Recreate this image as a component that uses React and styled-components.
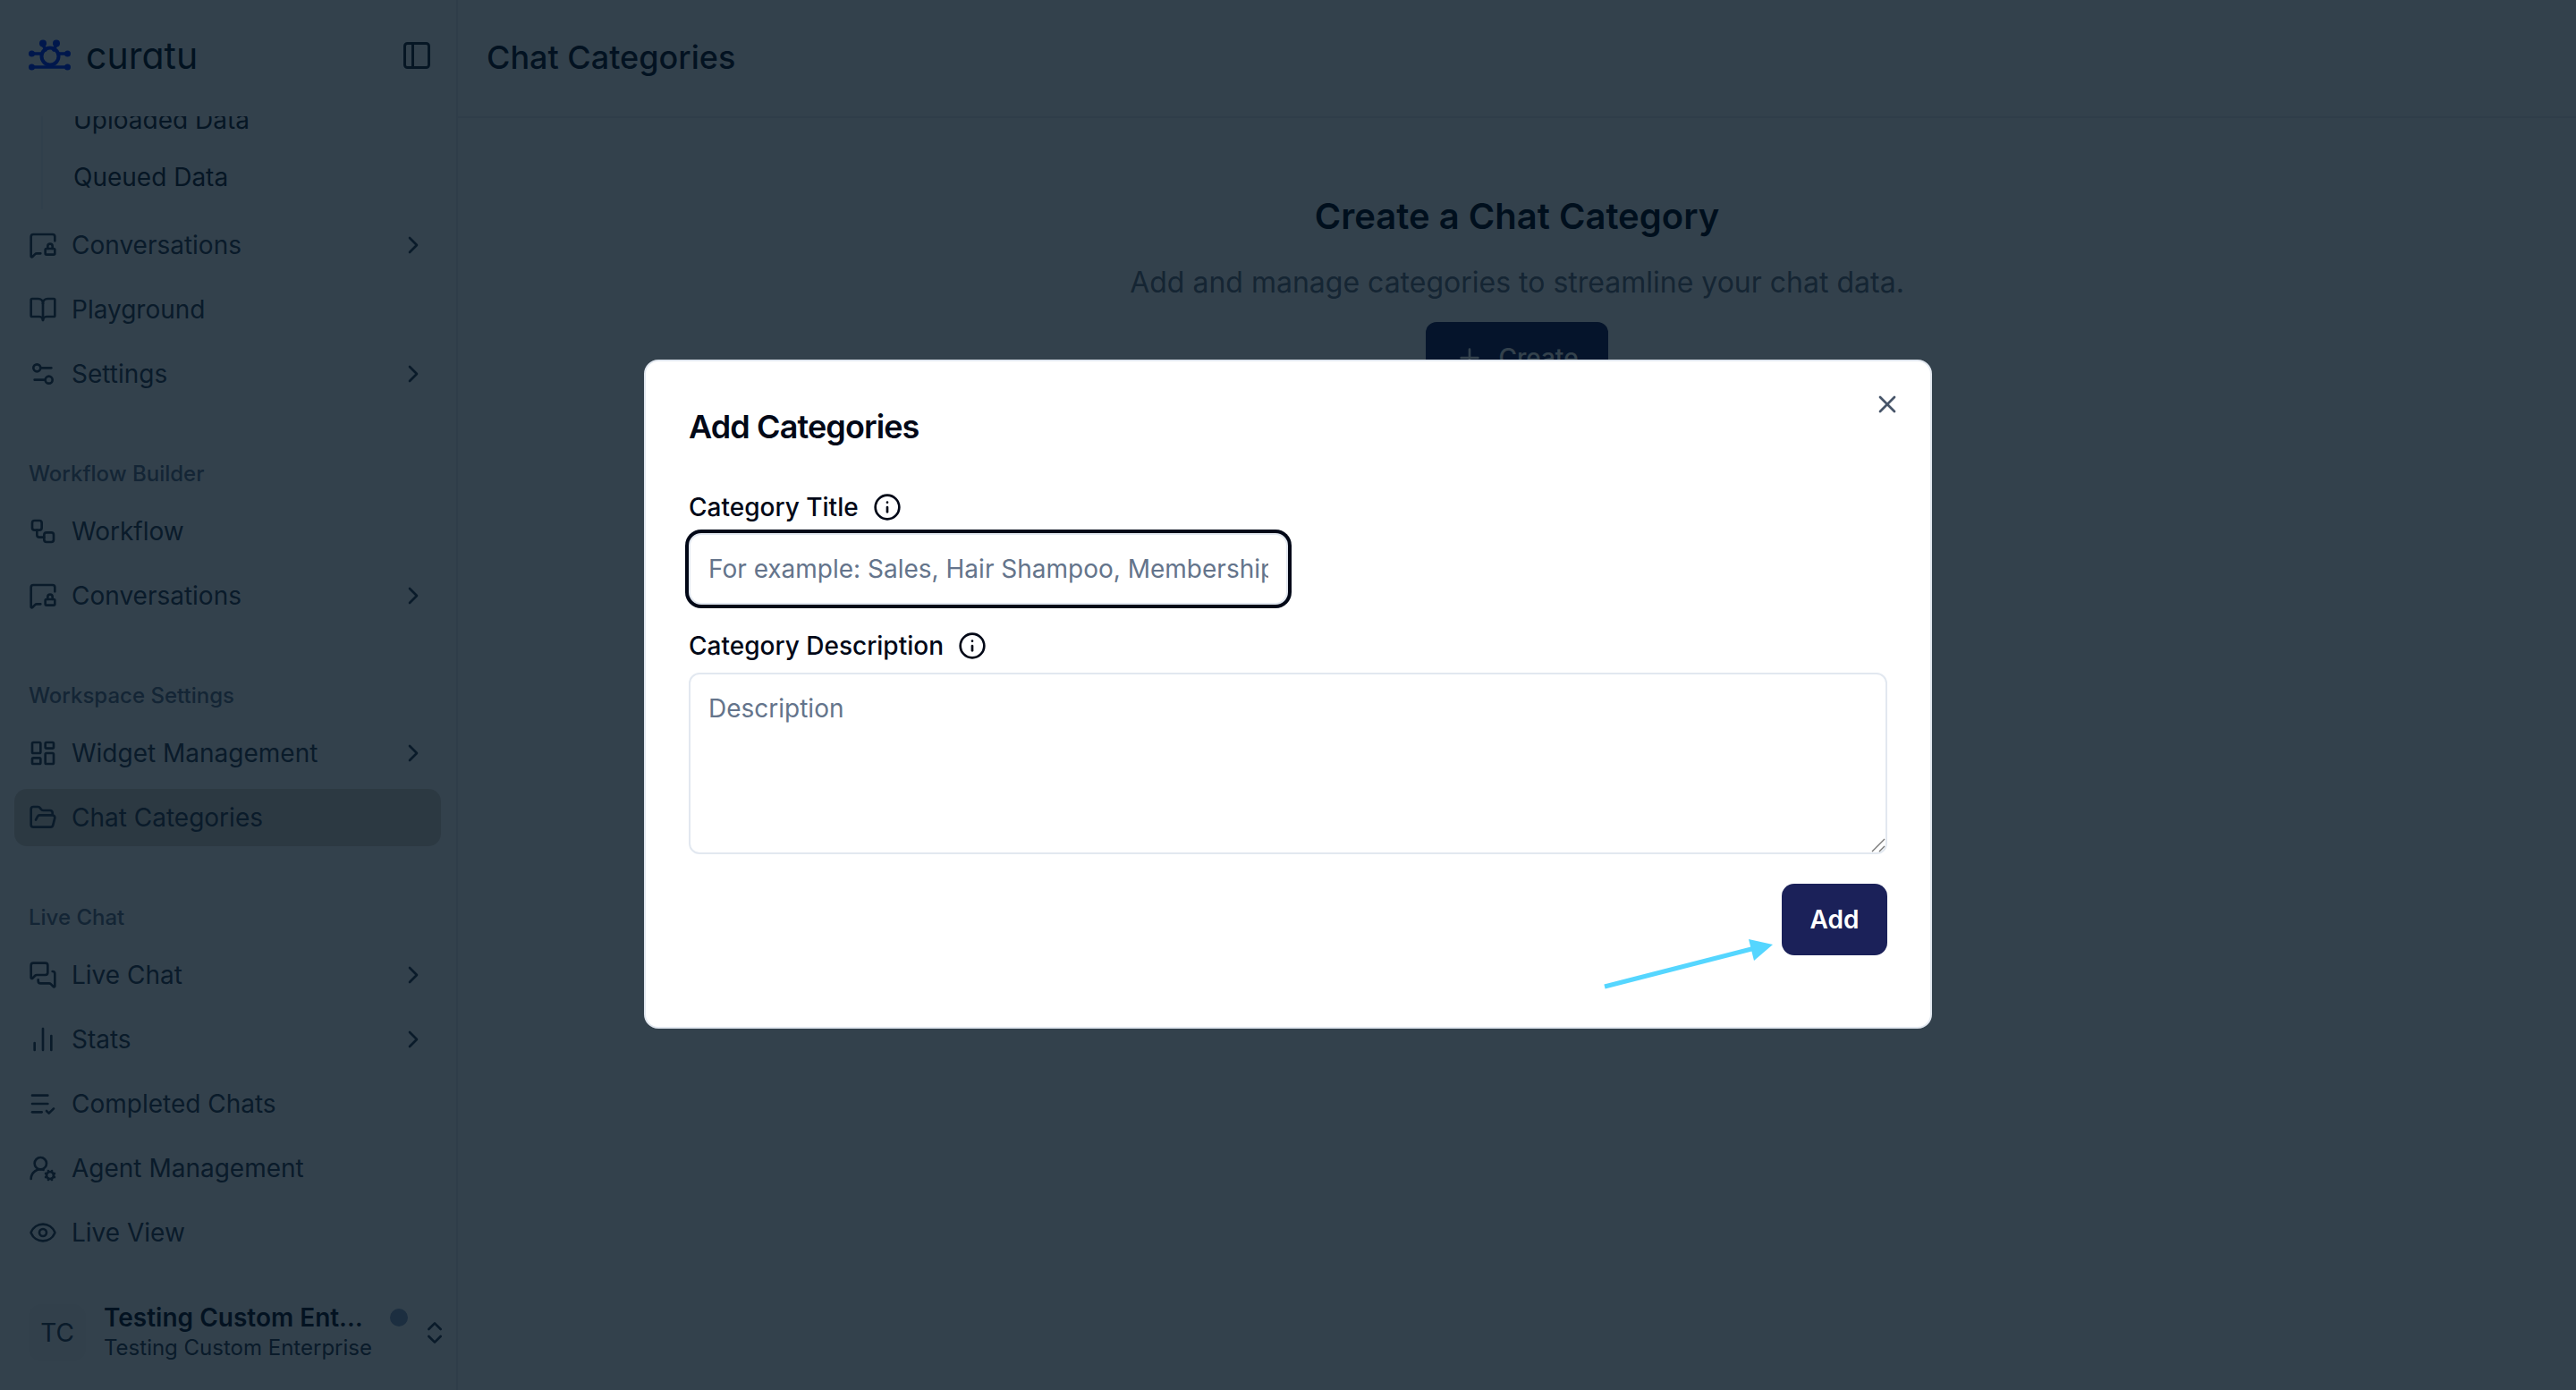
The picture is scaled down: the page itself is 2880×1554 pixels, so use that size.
import React from "react";
import styled, { createGlobalStyle } from "styled-components";
import {
  PanelLeft, MessageSquareLock, BookOpen, Settings2, ChevronRight, Workflow, LayoutDashboard,
  FolderOpen, MessagesSquare, ChartNoAxesColumn, ListCheck, UserRoundCog, Eye, ChevronsUpDown,
  Info, X, Plus,
} from "lucide-react";

const Global = createGlobalStyle`
  html, body { margin: 0; padding: 0; height: 100%; background: #fff; overflow: hidden; }
  * { box-sizing: border-box; }
  body { font-family: Inter, "Liberation Sans", sans-serif; color: #0f172a; }
`;

const Page = styled.div`
  display: flex;
  width: 100vw;
  height: 100vh;
  overflow: hidden;
`;

const Sidebar = styled.aside`
  display: flex;
  flex-direction: column;
  flex: 0 0 512px;
  height: 100%;
  border-right: 2px solid #e8ecef;
`;

const Brand = styled.div`
  display: flex;
  align-items: center;
  justify-content: space-between;
  flex: 0 0 130px;
  padding: 0 26px 6px 32px;
`;

const LogoWrap = styled.div`
  display: flex;
  align-items: center;
  gap: 17px;
`;

const Wordmark = styled.span`
  font-family: Inter, sans-serif;
  font-feature-settings: "cv11" 1;
  font-size: 41px;
  line-height: 44px;
  font-weight: 400;
  color: #0b1726;
`;

const PanelButton = styled.div`
  display: flex;
  color: #1e293b;
`;

const Nav = styled.nav`
  flex: 1;
  min-height: 0;
  overflow: hidden;
  padding: 0 17px 0 16px;
`;

const NavInner = styled.div`
  display: flex;
  flex-direction: column;
  gap: 47px;
  margin-top: -28px;
`;

const Group = styled.div`
  display: flex;
  flex-direction: column;
  gap: 8px;
`;

const GroupLabel = styled.div`
  display: flex;
  align-items: center;
  height: 57px;
  padding: 7px 0 0 16px;
  font-size: 24px;
  font-weight: 500;
  color: #64748b;
`;

const SubList = styled.div`
  margin-left: 30px;
  padding: 0 0 4px 0;
  border-left: 2px solid #f1f5f9;
`;

const SubItem = styled.div`
  display: flex;
  align-items: center;
  height: 64px;
  padding-left: 34px;
  font-size: 28px;
  color: #1e293b;
`;

const Item = styled.div`
  display: flex;
  align-items: center;
  gap: 16px;
  height: 64px;
  padding: 0 15px 0 16px;
  border-radius: 14px;
  font-size: 28px;
  color: #334155;
  background: ${(p) => (p.$active ? "#dcd5ce" : "transparent")};
  svg { flex: none; }
`;

const ItemText = styled.span`
  flex: 1;
  white-space: nowrap;
`;

const Footer = styled.div`
  display: flex;
  align-items: center;
  flex: 0 0 130px;
  padding: 2px 8px 0 32px;
`;

const Avatar = styled.div`
  display: flex;
  align-items: center;
  justify-content: center;
  flex: 0 0 64px;
  height: 64px;
  border-radius: 14px;
  background: #f7f8f9;
  font-size: 28px;
  color: #334155;
`;

const Account = styled.div`
  display: flex;
  flex-direction: column;
  flex: 0 0 340px;
  margin-left: 20px;
`;

const NameRow = styled.div`
  display: flex;
  align-items: center;
  justify-content: space-between;
  height: 34px;
`;

const Name = styled.span`
  width: 292px;
  font-size: 28px;
  font-weight: 600;
  color: #0f172a;
  white-space: nowrap;
  overflow: hidden;
  text-overflow: ellipsis;
`;

const Dot = styled.span`
  width: 20px;
  height: 20px;
  border-radius: 50%;
  background: #8ba0c0;
`;

const Sub = styled.span`
  height: 34px;
  line-height: 34px;
  font-size: 24px;
  color: #334155;
  white-space: nowrap;
`;

const Updown = styled.div`
  display: flex;
  margin-left: 14px;
  color: #334155;
`;

const Main = styled.main`
  display: flex;
  flex-direction: column;
  flex: 1;
  min-width: 0;
`;

const TopBar = styled.header`
  display: flex;
  align-items: center;
  flex: 0 0 132px;
  padding: 0 32px 2px;
  border-bottom: 2px solid #e8ecef;
`;

const PageTitle = styled.h1`
  margin: 0;
  font-size: 36px;
  font-weight: 500;
  color: #0f172a;
`;

const Hero = styled.section`
  display: flex;
  flex-direction: column;
  align-items: center;
  padding-top: 82px;
`;

const HeroTitle = styled.h2`
  margin: 0;
  font-size: 40px;
  line-height: 56px;
  font-weight: 600;
  color: #020817;
`;

const HeroText = styled.p`
  margin: 22px 0 20px;
  font-size: 32px;
  line-height: 48px;
  color: #6b7280;
`;

const CreateButton = styled.button`
  display: flex;
  align-items: center;
  justify-content: center;
  gap: 16px;
  width: 204px;
  height: 80px;
  border: 0;
  border-radius: 12px;
  background: #1b2159;
  color: #fff;
  font: 500 28px Inter, sans-serif;
`;

const Overlay = styled.div`
  position: fixed;
  inset: 0;
  display: flex;
  align-items: center;
  justify-content: center;
  background: rgba(0, 18, 31, 0.8);
`;

const Modal = styled.div`
  position: relative;
  display: flex;
  flex-direction: column;
  width: 1440px;
  margin-bottom: 2px;
  padding: 53px 48px 80px;
  background: #fff;
  border: 2px solid #e2e8f0;
  border-radius: 16px;
`;

const Close = styled.button`
  position: absolute;
  top: 32px;
  right: 32px;
  display: flex;
  padding: 0;
  border: 0;
  background: none;
  color: #475569;
`;

const ModalTitle = styled.h3`
  margin: 0 0 50px;
  font-size: 36px;
  line-height: 40px;
  font-weight: 600;
  letter-spacing: -0.9px;
  color: #020817;
`;

const Label = styled.label`
  display: flex;
  align-items: center;
  gap: 16px;
  height: 40px;
  font-size: 28px;
  font-weight: 500;
  color: #020817;
  svg { flex: none; }
`;

const TitleInput = styled.input`
  display: block;
  width: 670px;
  height: 80px;
  margin: 9px 0 26px;
  padding: 0 20px;
  border: 2px solid #e2e8f0;
  border-radius: 14px;
  outline: 0;
  box-shadow: 0 0 0 4px #020817;
  font: 400 28px Inter, sans-serif;
  color: #020817;
  &::placeholder { color: #64748b; opacity: 1; }
`;

const DescriptionWrap = styled.div`
  position: relative;
  margin: 10px 0 33px;
`;

const Description = styled.textarea`
  display: block;
  width: 100%;
  height: 203px;
  padding: 20px;
  border: 2px solid #e2e8f0;
  border-radius: 12px;
  outline: 0;
  resize: none;
  font: 400 28px/36px Inter, sans-serif;
  color: #020817;
  &::placeholder { color: #64748b; opacity: 1; }
`;

const ResizeGrip = styled.svg`
  position: absolute;
  right: 2px;
  bottom: 2px;
  width: 16px;
  height: 16px;
`;

const Actions = styled.div`
  display: flex;
  justify-content: flex-end;
`;

const AddButton = styled.button`
  width: 118px;
  height: 80px;
  border: 0;
  border-radius: 14px;
  background: #1b2159;
  color: #fff;
  font: 600 28px Inter, sans-serif;
`;

const ArrowMark = styled.svg`
  position: absolute;
  left: 1070px;
  top: 644px;
  width: 192px;
  height: 60px;
`;

const Logo = () => (
  <svg width="47" height="36" viewBox="0 0 47 36" fill="none" stroke="#0030ff" strokeWidth="3.6" strokeLinecap="round">
    <circle cx="24" cy="19" r="9.5" strokeWidth="4" />
    <path d="M16 6l3 6M31 6l-3 6M3 16h10M34 16h10M3 31h41" />
    <g fill="#0030ff" stroke="none">
      <circle cx="16" cy="4.5" r="4" />
      <circle cx="31" cy="4.5" r="4" />
      <circle cx="3.5" cy="16" r="3.5" />
      <circle cx="43.5" cy="16" r="3.5" />
      <circle cx="3.5" cy="31" r="3.5" />
      <circle cx="43.5" cy="31" r="3.5" />
    </g>
  </svg>
);

const NavRow = ({ icon: Icon, label, more, active }) => (
  <Item $active={active}>
    <Icon size={32} />
    <ItemText>{label}</ItemText>
    {more && <ChevronRight size={32} />}
  </Item>
);

export default function App() {
  return (
    <Page>
      <Global />
      <Sidebar>
        <Brand>
          <LogoWrap>
            <Logo />
            <Wordmark>curatu</Wordmark>
          </LogoWrap>
          <PanelButton><PanelLeft size={36} /></PanelButton>
        </Brand>
        <Nav>
          <NavInner>
            <Group>
              <SubList>
                <SubItem>Uploaded Data</SubItem>
                <SubItem>Queued Data</SubItem>
              </SubList>
              <NavRow icon={MessageSquareLock} label="Conversations" more />
              <NavRow icon={BookOpen} label="Playground" />
              <NavRow icon={Settings2} label="Settings" more />
            </Group>
            <Group>
              <GroupLabel>Workflow Builder</GroupLabel>
              <NavRow icon={Workflow} label="Workflow" />
              <NavRow icon={MessageSquareLock} label="Conversations" more />
            </Group>
            <Group>
              <GroupLabel>Workspace Settings</GroupLabel>
              <NavRow icon={LayoutDashboard} label="Widget Management" more />
              <NavRow icon={FolderOpen} label="Chat Categories" active />
            </Group>
            <Group>
              <GroupLabel>Live Chat</GroupLabel>
              <NavRow icon={MessagesSquare} label="Live Chat" more />
              <NavRow icon={ChartNoAxesColumn} label="Stats" more />
              <NavRow icon={ListCheck} label="Completed Chats" />
              <NavRow icon={UserRoundCog} label="Agent Management" />
              <NavRow icon={Eye} label="Live View" />
            </Group>
          </NavInner>
        </Nav>
        <Footer>
          <Avatar>TC</Avatar>
          <Account>
            <NameRow>
              <Name>Testing Custom Enterprise</Name>
              <Dot />
            </NameRow>
            <Sub>Testing Custom Enterprise</Sub>
          </Account>
          <Updown><ChevronsUpDown size={32} /></Updown>
        </Footer>
      </Sidebar>
      <Main>
        <TopBar><PageTitle>Chat Categories</PageTitle></TopBar>
        <Hero>
          <HeroTitle>Create a Chat Category</HeroTitle>
          <HeroText>Add and manage categories to streamline your chat data.</HeroText>
          <CreateButton><Plus size={32} />Create</CreateButton>
        </Hero>
      </Main>
      <Overlay>
        <Modal>
          <Close aria-label="Close"><X size={32} /></Close>
          <ModalTitle>Add Categories</ModalTitle>
          <Label>Category Title <Info size={32} /></Label>
          <TitleInput placeholder="For example: Sales, Hair Shampoo, Membership" />
          <Label>Category Description <Info size={32} /></Label>
          <DescriptionWrap>
            <Description placeholder="Description" />
            <ResizeGrip viewBox="0 0 16 16" fill="none" stroke="#777" strokeWidth="1.4">
              <path d="M1 15L15 1M9 15l6-6" />
            </ResizeGrip>
          </DescriptionWrap>
          <Actions><AddButton>Add</AddButton></Actions>
          <ArrowMark viewBox="0 0 192 60" fill="none">
            <path d="M2 55L170 12" stroke="#55d6ff" strokeWidth="5" />
            <path d="M190 8L163 2L169 26Z" fill="#55d6ff" />
          </ArrowMark>
        </Modal>
      </Overlay>
    </Page>
  );
}
